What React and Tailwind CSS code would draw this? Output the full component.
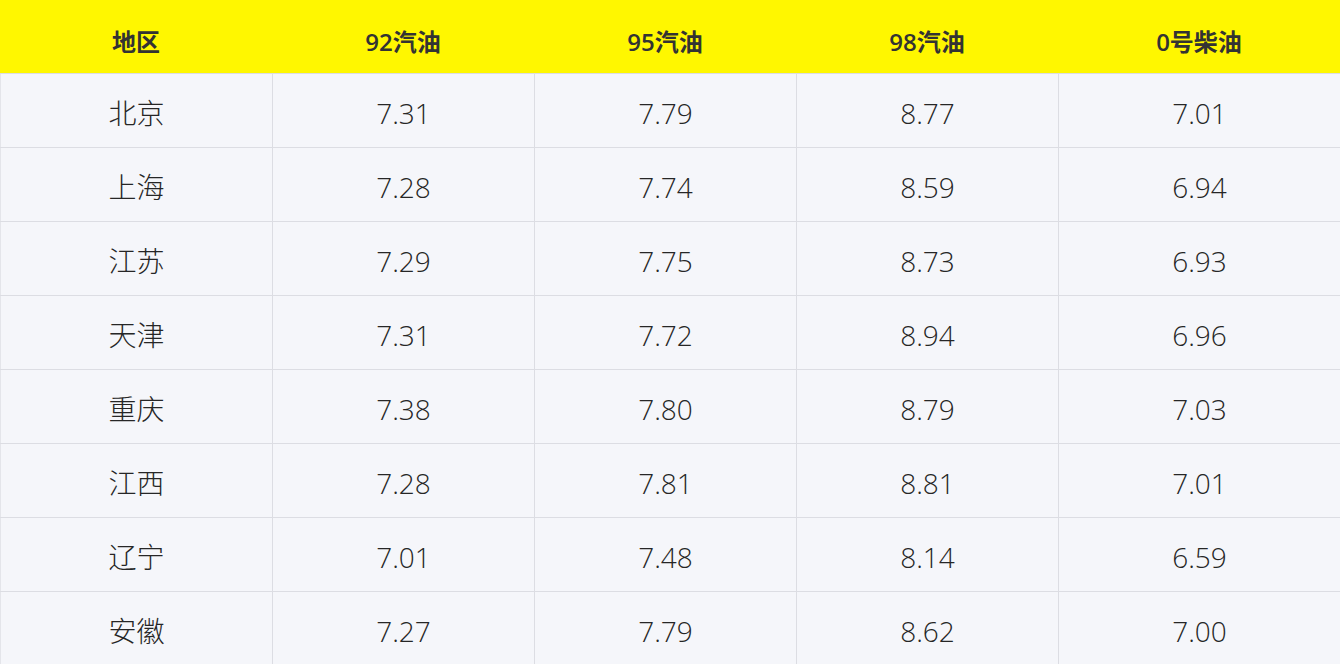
import React from "react";

const headers = ["地区", "92汽油", "95汽油", "98汽油", "0号柴油"];
const rows = [
  ["北京", "7.31", "7.79", "8.77", "7.01"],
  ["上海", "7.28", "7.74", "8.59", "6.94"],
  ["江苏", "7.29", "7.75", "8.73", "6.93"],
  ["天津", "7.31", "7.72", "8.94", "6.96"],
  ["重庆", "7.38", "7.80", "8.79", "7.03"],
  ["江西", "7.28", "7.81", "8.81", "7.01"],
  ["辽宁", "7.01", "7.48", "8.14", "6.59"],
  ["安徽", "7.27", "7.79", "8.62", "7.00"],
];

const font = { fontFamily: '"Open Sans", "Noto Sans CJK SC", sans-serif' };

export default function App() {
  return (
    <div className="w-[1340px] h-[664px] overflow-hidden bg-[#f5f6fa]" style={font}>
      <div className="grid grid-cols-[272px_262px_262px_262px_282px] h-[73px] bg-[#fff700]">
        {headers.map((h, i) => (
          <div key={i} className="flex items-center justify-center text-[24px] font-semibold text-[#333333] pt-[10px]">
            {h}
          </div>
        ))}
      </div>
      {rows.map((r, ri) => (
        <div
          key={ri}
          className="grid grid-cols-[272px_262px_262px_262px_282px] h-[74px] border-t border-[#dcdde3] bg-[#f5f6fa]"
        >
          {r.map((c, ci) => (
            <div
              key={ci}
              className={`flex items-center justify-center text-[28px] font-light text-[#262626] pt-[4px] ${ci > 0 ? "border-l border-[#dcdde3]" : "border-l border-[#e4e5ea]"}`}
            >
              {c}
            </div>
          ))}
        </div>
      ))}
    </div>
  );
}
